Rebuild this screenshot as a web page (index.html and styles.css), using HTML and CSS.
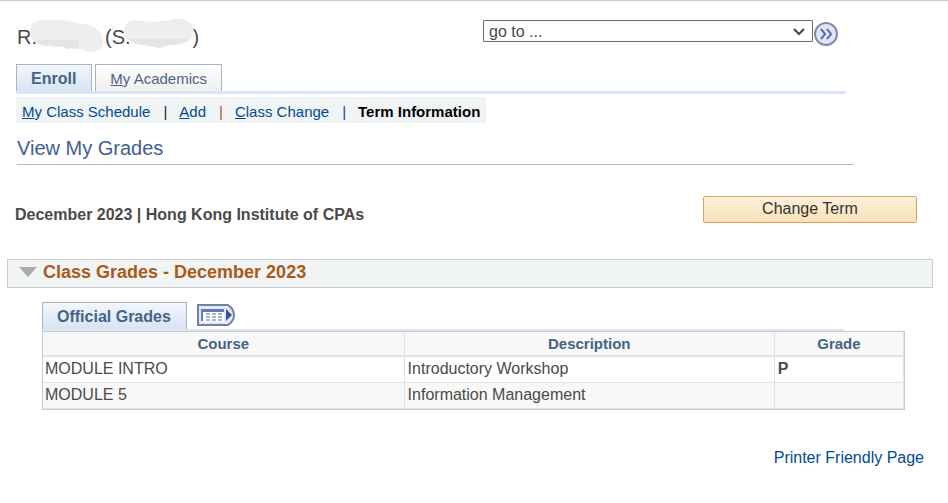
FILE: index.html
```html
<!DOCTYPE html>
<html lang="en">
<head>
<meta charset="utf-8">
<title>View My Grades</title>
<link rel="stylesheet" href="styles.css">
</head>
<body>
<header class="top">
  <div class="student">
    <span>R.</span>
    <svg class="mask mask-name" viewBox="0 0 76 36" aria-hidden="true">
      <path fill="#eeeeed" d="M10 2Q3 4 1 10Q-1 18 5 23L10 27L50 31L60 34Q72 34 74 27Q76 19 70 13Q64 6 48 5L33 2Z"/>
      <path fill="#e1e5e8" d="M7 22H50V31L43 30L38 31L34 28L28 29L22 27L16 28L11 26Z"/>
    </svg>
    <span>(S.</span>
    <svg class="mask mask-id" viewBox="0 0 72 32" aria-hidden="true">
      <path fill="#eeeeef" d="M9 2Q1 5 1 13Q1 20 6 22L13 26L37 30L46 27L61 25Q69 23 70 16Q72 6 63 2Q55-1 47 2L31 4Z"/>
      <path fill="#e1e5e8" d="M5 21H66L58 26L46 27L37 30L22 27L13 26Z"/>
    </svg>
    <span>)</span>
  </div>
  <form class="goto">
    <div class="select-wrap">
      <select aria-label="Go to"><option>go to ...</option></select>
      <svg class="chevron" viewBox="0 0 12 8" aria-hidden="true"><path d="M1 1L6 6L11 1" fill="none" stroke="#444" stroke-width="2"/></svg>
    </div>
    <button class="go" type="button" aria-label="Go">
      <svg viewBox="0 0 24 24" aria-hidden="true"><circle cx="12" cy="12" r="11" fill="#dce8fa" stroke="#858b9c" stroke-width="2"/><path d="M7 7L11 12L7 17M13 7L17 12L13 17" fill="none" stroke="#5065a8" stroke-width="2"/></svg>
    </button>
  </form>
</header>
<nav class="tabs main-tabs">
  <a class="tab active" href="#">Enroll</a>
  <a class="tab" href="#"><u>M</u>y Academics</a>
</nav>
<nav class="subnav">
  <a href="#"><u>M</u>y Class Schedule</a><span class="sep dark">|</span><a href="#"><u>A</u>dd</a><span class="sep brown">|</span><a href="#"><u>C</u>lass Change</a><span class="sep">|</span><strong>Term Information</strong>
</nav>
<main>
  <h1>View My Grades</h1>
  <div class="term">
    <strong>December 2023 | Hong Kong Institute of CPAs</strong>
    <button class="change" type="button">Change Term</button>
  </div>
  <section>
    <h2><svg class="arrow" viewBox="0 0 18 10" aria-hidden="true"><path d="M0 0H18L9 10Z" fill="#aaa"/></svg>Class Grades - December 2023</h2>
    <div class="grades">
      <div class="tabs grade-tabs">
        <a class="tab active" href="#">Official Grades</a>
        <button class="columns" type="button" aria-label="Show all columns">
          <svg viewBox="0 0 38 22" aria-hidden="true">
            <path d="M1 1H31Q37 5 37 11Q37 17 31 21H1Z" fill="#dfeafb" stroke="#75809b" stroke-width="2"/>
            <path d="M5 8H27V18H5Z" fill="#fff"/>
            <path d="M4 5H27V8H6V17H4Z" fill="#6379b9"/>
            <path d="M9 10H13M15 10H19M21 10H25M9 13H13M15 13H19M21 13H25M9 16H13M15 16H19M21 16H25" stroke="#52659f"/>
            <path d="M29 5L35 11L29 17Z" fill="#3d5293"/>
          </svg>
        </button>
      </div>
      <table>
        <colgroup><col class="course"><col class="description"><col class="grade"></colgroup>
        <thead><tr><th scope="col">Course</th><th scope="col">Description</th><th scope="col">Grade</th></tr></thead>
        <tbody>
          <tr><td>MODULE INTRO</td><td>Introductory Workshop</td><td><b>P</b></td></tr>
          <tr><td>MODULE 5</td><td>Information Management</td><td></td></tr>
        </tbody>
      </table>
    </div>
  </section>
  <a class="print" href="#">Printer Friendly Page</a>
</main>
</body>
</html>
```
FILE: styles.css
```css
* { box-sizing: border-box; }
body {
  margin: 0;
  padding: 0 15px 0 7px;
  border-top: 1px solid #c8c9d3;
  background: #fff;
  color: #4a4a4a;
  font: 16px/20px "Liberation Sans", Arial, sans-serif;
}
a { color: #004b91; text-decoration: none; }
button { font: inherit; padding: 0; border: 0; background: none; }
svg { display: block; }

.top {
  display: flex;
  justify-content: space-between;
  padding: 19px 95px 0 10px;
}
.student { display: flex; height: 44px; font-size: 20px; line-height: 34px; }
.mask { flex: none; position: relative; }
.mask-name { width: 76px; height: 36px; margin: -2px 0 0 -8px; }
.mask-id { width: 72px; height: 32px; margin: -2px -2px 0 -8px; }
.goto { display: flex; width: 40%; min-width: 355px; gap: 1px; }
.select-wrap { flex: 1; position: relative; height: 22px; }
select {
  appearance: none;
  width: 100%;
  height: 22px;
  padding: 1px 5px 0;
  border: 1px solid #6b6b6b;
  border-radius: 1px;
  background: #fff;
  color: #4a4a4a;
  font: inherit;
}
.chevron { position: absolute; right: 8px; top: 8px; width: 12px; height: 8px; pointer-events: none; }
.go { width: 24px; height: 24px; margin-top: 2px; }

.tabs { display: flex; border-bottom: 3px solid #dbe6f4; }
.main-tabs { gap: 3px; margin: 0 87px 0 9px; }
.tab {
  height: 27px;
  padding: 0 14px;
  border: 1px solid #a9b3c8;
  border-bottom: 0;
  background: linear-gradient(#fff, #f0f0f0);
  color: #4c6485;
  font-size: 15px;
  line-height: 28px;
}
.tab.active {
  padding: 0 15px 0 14px;
  background: linear-gradient(#f3f6fd, #d8e4f3);
  color: #426486;
  font-size: 16px;
  font-weight: bold;
}

.subnav {
  display: flex;
  width: fit-content;
  height: 26px;
  margin: 3px 0 0 9px;
  padding: 0 6px;
  background: #f0f4f5;
  font-size: 15px;
  line-height: 30px;
}
.subnav strong { color: #000; }
.sep { margin: 0 12px 0 13px; color: #004b91; }
.sep.dark { color: #202040; }
.sep.brown { color: #a55b13; }

h1 {
  margin: 11px 79px 0 10px;
  padding-bottom: 2px;
  border-bottom: 1px solid #bbb;
  color: #426092;
  font-size: 20px;
  line-height: 28px;
  font-weight: normal;
}
.term {
  display: flex;
  justify-content: space-between;
  align-items: center;
  margin: 28px 16px 0 8px;
}
.term strong { padding-top: 12px; }
.change {
  width: 214px;
  height: 27px;
  border: 1px solid #d9a066;
  border-radius: 2px;
  background: linear-gradient(#fdf1dc, #fae1b8);
  color: #333;
}
h2 {
  display: flex;
  align-items: center;
  gap: 6px;
  height: 29px;
  margin: 34px 0 0;
  padding: 0 11px 4px;
  border: 1px solid #c7cbd1;
  background: #f0f4f5;
  color: #ab5a16;
  font-size: 18px;
  line-height: 22px;
}
.arrow { width: 18px; height: 10px; }
.grades { margin: 14px 28px 0 35px; }
.grade-tabs { gap: 10px; margin-right: 61px; border-bottom-width: 2px; }
.columns { width: 38px; height: 22px; margin-top: 2px; }
.columns svg { width: 38px; height: 22px; }
table {
  width: 100%;
  table-layout: fixed;
  border-spacing: 0;
  border: 1px solid #c7c9cf;
}
.course { width: 42%; }
.description { width: 43%; }
.grade { width: 15%; }
th, td { padding: 0 3px; border-right: 1px solid #e2e2e2; }
th {
  height: 25px;
  border-bottom: 2px solid #e2e2e2;
  background: #f8f8f8;
  color: #426486;
  font-size: 15px;
}
td { height: 26px; padding: 0 3px 1px 2px; border-bottom: 1px solid #e2e2e2; }
td + td { padding-left: 3px; }
tbody tr:last-child td { background: #f8f8f8; }
.print { display: block; width: fit-content; margin: 38px 9px 34px auto; }
```
